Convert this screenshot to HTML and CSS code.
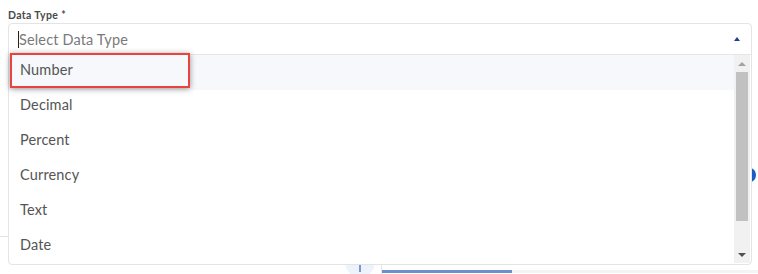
FILE: index.html
```html
<!DOCTYPE html>
<html>
<head>
<meta charset="utf-8">
<link rel="stylesheet" href="styles.css">
</head>
<body>
<div class="backdrop">
  <div class="bg-rule"></div>
  <div class="bg-circle"><span class="bg-tick"></span></div>
  <div class="bg-divider"></div>
  <div class="bg-progress"><div class="bg-progress-fill"></div></div>
  <div class="bg-dot"></div>
</div>
<div class="field">
  <div class="label">Data Type *</div>
  <div class="select">
    <div class="control">
      <span class="caret"></span>
      <span class="placeholder">Select Data Type</span>
      <span class="arrow-up"></span>
    </div>
    <div class="menu">
      <ul class="options">
        <li class="option active">Number</li>
        <li class="option">Decimal</li>
        <li class="option">Percent</li>
        <li class="option">Currency</li>
        <li class="option">Text</li>
        <li class="option">Date</li>
      </ul>
      <div class="scrollbar">
        <div class="sb-btn"><span class="sb-up"></span></div>
        <div class="sb-track"><div class="sb-thumb"></div></div>
        <div class="sb-btn"><span class="sb-down"></span></div>
      </div>
    </div>
  </div>
  <div class="highlight"></div>
</div>
</body>
</html>
```
FILE: styles.css
```css
html, body {
  margin: 0;
  padding: 0;
  background: #fff;
}
body {
  width: 758px;
  height: 274px;
  overflow: hidden;
  position: relative;
  font-family: "Lato", "Noto Sans", sans-serif;
  color: #555;
}
.backdrop {
  position: absolute;
  inset: 0;
}
.bg-rule {
  position: absolute;
  left: 0;
  top: 236px;
  width: 10px;
  height: 1px;
  background: #e4e4e4;
}
.bg-circle {
  position: absolute;
  left: 345px;
  top: 244px;
  width: 30px;
  height: 34px;
  border-radius: 50%;
  background: #eef2fb;
}
.bg-tick {
  position: absolute;
  left: 14px;
  top: 21px;
  width: 2px;
  height: 7px;
  background: #7a98cf;
}
.bg-divider {
  position: absolute;
  left: 381px;
  top: 250px;
  width: 1px;
  height: 24px;
  background: #e6e6e6;
}
.bg-progress {
  position: absolute;
  left: 382px;
  top: 270px;
  width: 376px;
  height: 3px;
  background: #f4f4f4;
}
.bg-progress-fill {
  width: 130px;
  height: 100%;
  background: #6b8fcb;
}
.bg-dot {
  position: absolute;
  left: 744px;
  top: 168px;
  width: 12px;
  height: 14px;
  border-radius: 50%;
  background: #1a5bcc;
}
.field {
  position: relative;
  padding: 9px 0 0 8px;
}
.label {
  font-size: 10.5px;
  font-weight: 700;
  letter-spacing: 0.35px;
  line-height: 13px;
  color: #4a4a4a;
  margin-bottom: 1px;
}
.select {
  position: relative;
  width: 742px;
  border: 1px solid #e4e4e4;
  border-radius: 4px;
  background: #fff;
}
.control {
  display: flex;
  align-items: center;
  height: 30px;
  padding-left: 9px;
  padding-right: 11px;
  border-bottom: 1px solid #e6e6e6;
}
.caret {
  width: 1px;
  height: 17px;
  background: #222;
}
.placeholder {
  flex: 1;
  font-size: 14.5px;
  letter-spacing: 0.15px;
  color: #7a7a7a;
}
.arrow-up {
  width: 0;
  height: 0;
  border-left: 3.5px solid transparent;
  border-right: 3.5px solid transparent;
  border-bottom: 4px solid #1d3f94;
}
.menu {
  display: flex;
  height: 209px;
  overflow: hidden;
}
.options {
  flex: 1;
  list-style: none;
  margin: 0;
  padding: 0;
}
.option {
  height: 35px;
  line-height: 30px;
  padding-left: 11px;
  font-size: 14.5px;
  letter-spacing: 0.15px;
  color: #555;
}
.option.active {
  background: #f6f8fb;
}
.scrollbar {
  width: 16px;
  margin-right: 1px;
  height: 208px;
  background: #f1f1f1;
  display: flex;
  flex-direction: column;
}
.sb-btn {
  height: 17px;
  display: flex;
  align-items: center;
  justify-content: center;
}
.sb-up {
  width: 0;
  height: 0;
  border-left: 4px solid transparent;
  border-right: 4px solid transparent;
  border-bottom: 4px solid #a3a3a3;
}
.sb-down {
  width: 0;
  height: 0;
  border-left: 4px solid transparent;
  border-right: 4px solid transparent;
  border-top: 4px solid #505050;
}
.sb-track {
  flex: 1;
  padding: 0 2px;
}
.sb-thumb {
  height: 149px;
  background: #c1c1c1;
}
.highlight {
  position: absolute;
  left: 10px;
  top: 53px;
  width: 176px;
  height: 31px;
  border: 2.5px solid #ea4141;
  box-shadow: 0 1px 6px rgba(0, 0, 0, 0.4);
}
```
